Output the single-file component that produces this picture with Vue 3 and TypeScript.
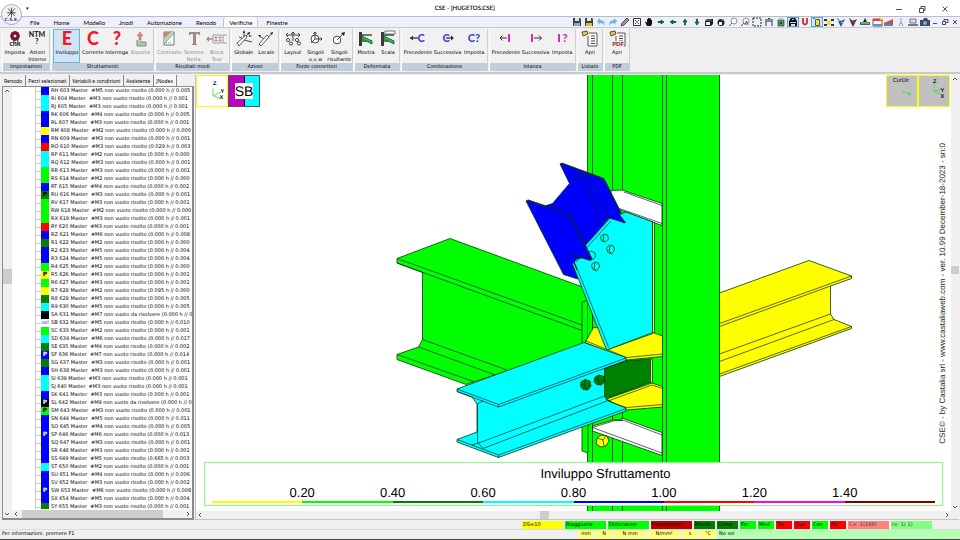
<script setup lang="ts">
interface Action { icon: string; label: string; active?: boolean; disabled?: boolean }
interface Group { title: string; size: string; actions: Action[] }
interface Row { code: string; num: number; color: string; mark: string; text: string }

const menus = ['File', 'Home', 'Modello', 'Jnodi', 'Automazione', 'Renodo', 'Verifiche', 'Finestre']

const groups: Group[] = [
  { title: 'Impostazioni', size: 'g48', actions: [{ icon: 'chk', label: 'Imposta' }, { icon: 'ntm', label: 'Azioni Interne' }] },
  { title: 'Sfruttamenti', size: 'g104', actions: [
    { icon: 'env', label: 'Inviluppo', active: true }, { icon: 'cur', label: 'Corrente' },
    { icon: 'ask', label: 'Interroga' }, { icon: 'exp', label: 'Esporta', disabled: true }] },
  { title: 'Risultati modi', size: 'g75', actions: [
    { icon: 'con', label: 'Contrasto', disabled: true }, { icon: 'sez', label: 'Sezione Netta', disabled: true },
    { icon: 'blk', label: 'Block Tear', disabled: true }] },
  { title: 'Azioni', size: 'g48', actions: [{ icon: 'glo', label: 'Globale' }, { icon: 'loc', label: 'Locale' }] },
  { title: 'Forze connettori', size: 'g73', actions: [
    { icon: 'lay', label: 'Layout' }, { icon: 'uvw', label: 'Singoli u,v,w' }, { icon: 'ris', label: 'Singoli risultante' }] },
  { title: 'Deformata', size: 'g46', actions: [{ icon: 'mos', label: 'Mostra' }, { icon: 'sca', label: 'Scala' }] },
  { title: 'Combinazione', size: 'g87', actions: [
    { icon: 'cprev', label: 'Precedente' }, { icon: 'cnext', label: 'Successiva' }, { icon: 'cset', label: 'Imposta' }] },
  { title: 'Istanza', size: 'g87', actions: [
    { icon: 'iprev', label: 'Precedente' }, { icon: 'inext', label: 'Successiva' }, { icon: 'iset', label: 'Imposta' }] },
  { title: 'Listato', size: 'g26', actions: [{ icon: 'list', label: 'Apri' }] },
  { title: 'PDF', size: 'g26', actions: [{ icon: 'pdf', label: 'Apri' }] },
]

const label = (t: string, x: number, y: number, size: number, color: string) =>
  `<text x="${x}" y="${y}" font-family="Lato, sans-serif" font-weight="900" font-size="${size}" text-anchor="middle" fill="${color}">${t}</text>`
const letter = (t: string) => label(t, 11, 15, 18, '#ed1c24')
const sheet = '<path d="M9 3H17V16H8V6" fill="#fff" stroke="#555" stroke-width="1"/><path d="M11 6h4M11 8.500h4M11 11h4M11 13.500h4" stroke="#444"/><path d="M2 2l5-1 1 3-5 2z" fill="#e8c840" stroke="#333" stroke-width=".8"/>'
const beam = '<path d="M4 2h3v14H4z" fill="#3a3a3a"/><path d="M7 5h10M7 11h10" stroke="#444" stroke-width="1.500"/><path d="M7 6l10 5v3L7 9z" fill="#1fc050" stroke="#165a2a" stroke-width=".8"/>'

const icons: Record<string, string> = {
  chk: '<circle cx="11" cy="6" r="3.400" fill="none" stroke="#7c1030" stroke-width="2.600"/><path d="M11 1v10M6 6h10M7.500 2.500l7 7M14.500 2.500l-7 7" stroke="#7c1030" stroke-width="1.200"/><circle cx="11" cy="6" r="1.300" fill="#f0f0f0"/>' + label('chk', 11, 16, 7, '#222'),
  ntm: label('NTM', 11, 7, 7, '#222') + label('?', 11, 14, 7, '#222'),
  env: letter('E'),
  cur: letter('C'),
  ask: letter('?'),
  exp: '<path d="M10 2l3 4h-2v4H9V6H7z" fill="#d88a90" stroke="#a66" stroke-width=".5"/><path d="M7 10v6h9v-4h-5v-1" fill="#9bd3a8" stroke="#777" stroke-width=".8"/>',
  con: '<path d="M6 2h10v13H6z" fill="#fff" stroke="#777"/><path d="M6 2h10L6 13z" fill="#b7d99a"/><path d="M6 2h7L6 8z" fill="#cf7d86"/><path d="M16 3L6 14" stroke="#678fc8"/><path d="M8 13h6" stroke="#777" stroke-dasharray="1 1"/>',
  sez: '<path d="M6 2h11v3h-1l-1-1h-2v10h1v1H9v-1h1V4H8L7 5H6z" fill="#a08a86"/>',
  blk: '<path d="M1 9h6M3 7L1 9l2 2" fill="none" stroke="#c77" stroke-width="1.300"/><path d="M16 5H7v8h9M21 5h-4v8h4" fill="none" stroke="#999"/><path d="M9 7h2v1H9zM13 7h2v1h-2zM9 10h2v1H9zM13 10h2v1h-2z" fill="none" stroke="#a66" stroke-width=".7"/>',
  glo: '<path d="M5 15L17 2M11 1v9l8 2M11 9l-5-2" fill="none" stroke="#333" stroke-width=".9"/><path d="M4 13l9-8 1 2-8 9z" fill="#fff" stroke="#333" stroke-width=".8"/><path d="M17 2l-1 3-2-2zM11 0l1 3h-2zM19 6l-3 1 0-2z" fill="#222"/>',
  loc: '<path d="M4 6l7 4 7-8" fill="none" stroke="#333" stroke-width=".8"/><path d="M4 14l8-9 2 2-8 9z" fill="#fff" stroke="#333" stroke-width=".8"/><path d="M18 2l-1 3-2-2zM3 5l3 0-1 2z" fill="#222"/>',
  lay: '<path d="M11 2v9M4 5h14M9 4l2-2 2 2M16 3l2 2-2 2M6 3L4 5l2 2" fill="none" stroke="#333" stroke-width=".9"/><circle cx="6" cy="10" r="1.600" fill="#fff" stroke="#333" stroke-width=".9"/><circle cx="15" cy="10" r="1.600" fill="#fff" stroke="#333" stroke-width=".9"/><circle cx="9" cy="13.500" r="1.600" fill="#fff" stroke="#333" stroke-width=".9"/><circle cx="17" cy="13.500" r="1.600" fill="#fff" stroke="#333" stroke-width=".9"/>',
  uvw: '<circle cx="10" cy="9" r="4" fill="#fff" stroke="#333" stroke-width=".9"/><path d="M10 9V2M10 9h7M8.500 4L10 2l1.500 2M15.500 7.500l1.500 1.500-1.500 1.500M10 9l-4 4" fill="none" stroke="#333" stroke-width=".9"/>',
  ris: '<circle cx="9" cy="10" r="3.800" fill="#fff" stroke="#333" stroke-width=".9"/><path d="M9 10l7-7" stroke="#333" stroke-width=".9"/><path d="M17 2l-1 4-3-3z" fill="#222"/>',
  mos: beam,
  sca: beam + '<path d="M8 1h10v3H8z" fill="#fff" stroke="#555" stroke-width=".8"/>',
  cprev: '<path d="M3 8h8" stroke="#333" stroke-width="1.300"/><path d="M3 8l3-2.500v5z" fill="#333"/>' + label('C', 14, 12, 11, '#4048d0'),
  cnext: label('C', 9, 12, 11, '#4048d0') + '<path d="M9 8h7" stroke="#333" stroke-width="1.300"/><path d="M17 8l-3-2.500v5z" fill="#333"/>',
  cset: label('C?', 11, 12, 11, '#4048d0'),
  iprev: '<path d="M5 8h7M7.500 5.500L5 8l2.500 2.500" fill="none" stroke="#333"/><path d="M14 4v8" stroke="#c830c8" stroke-width="2"/>',
  inext: '<path d="M7 4v8" stroke="#c830c8" stroke-width="2"/><path d="M9 8h7M14 5.500L16.500 8 14 10.500" fill="none" stroke="#333"/>',
  iset: '<path d="M8 4v8" stroke="#c830c8" stroke-width="2"/>' + label('?', 14, 12, 11, '#c830c8'),
  list: '<g transform="translate(1)">' + sheet + '</g>',
  pdf: '<g transform="translate(2)">' + sheet + '</g><path d="M6 11h12v6H6z" fill="#f0f0f0"/>' + label('PDF', 12, 16, 6, '#a01830'),
}

const floppy = (c: string) => `<path d="M2 1h7l1 1v7H2z" fill="#3c4450"/><path d="M4 1h4v3H4z" fill="#dfe5ee"/><path d="M3 6h6v3H3z" fill="${c}"/>`
const arrow = (deg: number) => `<g transform="rotate(${deg} 6 5)"><path d="M3 4.500h3V3l3 2-3 2V5.500H3z" fill="#0a8a2c" stroke="#042" stroke-width=".7"/></g>`

const tools: { name: string; art: string; on?: boolean }[] = [
  { name: 'Salva', art: floppy('#9aa4b4') },
  { name: 'Salva con nome', art: floppy('#f0b820') },
  { name: 'Annulla', art: '<path d="M2 4l3-3v2c4 0 5 3 5 6-1-2-2-3-5-3v2z" fill="#6db8e8"/>' },
  { name: 'Ripeti', art: '<path d="M10 4L7 1v2C3 3 2 6 2 9c1-2 2-3 5-3v2z" fill="#6db8e8"/>' },
  { name: 'Modifica', art: '<path d="M2 9l1-3 5-5 2 2-5 5z" fill="#999" stroke="#444" stroke-width=".9"/>' },
  { name: 'Griglia', art: '<path d="M2.500 1.500h7v7h-7z" fill="#fff" stroke="#333"/><path d="M4 3.500h1M7 3.500h1M4 6.500h1M7 6.500h1M5 5h2" stroke="#333"/>' },
  { name: 'Sposta', art: '<path d="M4 9L2 5l1-.500L4 6V2h1V1h1.500v.500H8V3h1v4L8 9z" fill="#111"/>' },
  { name: 'Destra', art: arrow(0) }, { name: 'Sinistra', art: arrow(180) },
  { name: 'Su', art: arrow(270) }, { name: 'Giù', art: arrow(90) },
  { name: 'Assonometria', art: '<path d="M2 4l2-2h6v5L8 9H2z" fill="#222"/><path d="M3 5h4v3H3z" fill="#eef"/><path d="M4 2.500h5L8 4H3z" fill="#2a8a4a"/>' },
  { name: 'Ruota', art: '<circle cx="6" cy="5.500" r="3.500" fill="#222"/><path d="M4 5h3v3H4z" fill="#eef"/><path d="M5 3l3-1 1 2z" fill="#3a9a7a"/>' },
  { name: 'Zoom', art: '<circle cx="7" cy="4" r="3" fill="#f8fbff" stroke="#888" stroke-width=".9"/><path d="M5 6L2 9" stroke="#666"/>' },
  { name: 'Zoom tutto', art: '<circle cx="7" cy="4" r="3" fill="#f8fbff" stroke="#888" stroke-width=".9"/><path d="M5 6L2 9M6 8l1.500-4L9 8" fill="none" stroke="#555"/>' },
  { name: 'Selezione', art: '<path d="M2 1h8v8H2z" fill="none" stroke="#222" stroke-dasharray="2 1"/>' },
  { name: 'Sezione', art: '<path d="M3 9V4h6v5" fill="none" stroke="#333"/><path d="M2 2h8v2H2z" fill="#6a9a7a"/><path d="M5 1h2v1H5z" fill="#333"/>' },
  { name: 'Vista', art: '<path d="M3 3h6v6H3z" fill="#3fb36a" stroke="#333" stroke-width=".7"/><path d="M4 1h4v2H4z" fill="#bbb"/><circle cx="6" cy="6" r="1.500" fill="#724"/>' },
  { name: 'Stampa', on: true, art: '<path d="M2 4l2-3h4l2 3v5H8V7H4v2H2z" fill="#111"/><path d="M3 5.500h6M5 2.500h2" stroke="#ddd" stroke-width=".9"/>' },
  { name: 'Calamita', art: '<path d="M4 1v5q2 3 4 0V1" fill="none" stroke="#d82020" stroke-width="1.700"/>' },
  { name: 'Sfondo', on: true, art: '<path d="M4.500 2.500h4v6h-4z" fill="#ffe020" stroke="#555"/><path d="M2 1h2v1H2z" fill="#4a90d0"/>' },
  { name: 'Nodi', art: '<path d="M1 2h3v2H1zM8 2h3v2H8zM1 7h3v2H1zM8 7h3v2H8z" fill="#333"/><path d="M4 3h4v5H4z" fill="#e8dc50"/>' },
  { name: 'Bulloni', art: '<path d="M2 1l4 3 4-2-2 4-2 4-2-4z" fill="#2a5a7a"/><path d="M3 3h2v1H3zM6 5h2v1H6z" fill="#9cf"/>' },
  { name: 'Togli bulloni', art: '<path d="M2 1l4 3 4-2-2 4-2 4-2-4z" fill="#2d3f4c"/><path d="M6 3h2v3H6z" fill="#d02020"/>' },
  { name: 'Carichi', art: '<path d="M1 5h10v3H1z" fill="#207090"/><path d="M6 1l2 4H4z" fill="#222"/><path d="M2 6h8" stroke="#e8d030"/>' },
  { name: 'Diagrammi', art: '<path d="M2 2h9v7H2z" fill="#fff" stroke="#c33"/><path d="M2 2h9v2H2z" fill="#e04040"/><path d="M2 7h9v2H2z" fill="#40a0d0"/><path d="M9 1h2v2H9z" fill="#fd0"/>' },
  { name: 'Inclinata', art: '<path d="M1 6l9-4v7H1z" fill="#d84a4a"/><path d="M1 7h9v2H1z" fill="#3898b8"/>' },
  { name: 'Misura', art: '<path d="M6 1v4L4 9M6 5l2 4" fill="none" stroke="#999"/>' },
  { name: 'Livella', art: '<path d="M3 2h6v4H3z" fill="#dde" stroke="#556" stroke-width=".8"/><path d="M1 8h10" stroke="#456" stroke-width="1.500"/>' },
  { name: 'Fotografia', art: '<path d="M1 3h3l1-2h3l1 2h2v6H1z" fill="#3c4c68"/><circle cx="6" cy="6" r="2" fill="#8ea4c0"/>' },
]

const sheets = ['Renodo', 'Pezzi selezionati', 'Variabili e condizioni', 'Assistente', 'JNodes']

const palette: Record<string, string> = {
  b: '#0000ff', c: '#00ffff', y: '#ffff00', r: '#ff0000', l: '#00ff00', g: '#008000', k: '#000000', w: '#ffffff',
}

// code, member count, colour key, optional mark, second ratio, optional first ratio
const source = `RH 5 b - 005|RI 3 c - 001|RJ 3 c - 001|RK 4 b - 005|RL 3 b - 001|RM 2 y - 000|RN 3 b - 001|RO 3 r - 003 029
RP 2 c - 000|RQ 3 c - 001|RR 3 l - 001|RS 2 l - 000|RT 4 b - 002|RU 3 g P 001|RV 3 l - 001|RW 2 l - 000|RX 3 l - 001
RY 3 r - 001|RZ 6 b - 008|R1 2 g - 000|R2 5 b - 004|R3 5 b - 004|R4 2 l - 000|R5 3 y P 001|R6 3 l - 001|R7 2 y - 000 095
R8 5 g - 005|R9 5 c - 005|SA 7 k - 000 x|SB 5 w sel 010|SC 2 l - 001|SD 6 c - 017|SE 4 g - 002|SF 7 b P 014|SG 3 g - 001
SH 3 b - 001|SI 3 c - 001|SJ 3 c - 001|SK 3 b - 001|SL 9 k P 000 x|SM 3 l P 001|SN 5 b - 011|SO 4 b - 005|SP 6 b P 013
SQ 3 b - 001|SR 3 b - 001|SS 5 b - 003 665|ST 2 c - 001|SU 4 b - 006|SV 3 b - 002|SW 6 b P 008|SX 5 b - 004|SY 3 g - 001`

const rows: Row[] = source.split(/[|\n]/).map((item, i) => {
  const [code, m, color, mark, second, first] = item.split(' ')
  const pending = first === 'x'
  const a = pending || !first ? '000' : first
  return {
    code, num: 603 + i, color, mark: mark === '-' ? '' : mark,
    text: `Master  #M${m} non vuoto ${pending ? 'da risolvere' : 'risolto'} (0.${a} h // ${pending ? '0' : '0.' + second}`,
  }
})

const ticks = ['0.20', '0.40', '0.60', '0.80', '1.00', '1.20', '1.40']
const scaleColors = ['yellow', 'lime', 'green', 'cyan', 'blue', 'red', 'magenta', 'maroon']

const flags = [
  ['DS=10', 'wide yellow'], ['Riaggiusta', 'wide lime'], ['Dislocatore', 'wide lime'], ['Intersettore', 'wide crimson'],
  ['Memb', 'mid green'], ['Comp', 'mid green'], ['Fin', 'slim lime'], ['Med', 'slim lime'], ['Ter', 'slim red'],
  ['Qua', 'slim red'], ['Cen', 'slim lime'], ['Alt', 'slim red'], ['C=  1(168)', 'wide pink'], ['I=  1( 1)', 'wide mint'],
]
const units = [['mm', 'slim'], ['N', 'slim'], ['N mm', 'broad'], ['N/mm²', 'broad'], ['s', 'slim'], ['°C', 'slim']]
</script>

<template>
  <div class="app">
    <header class="head">
      <button class="orb" aria-label="Menu CSE">
        <svg viewBox="0 0 22 22">
          <path d="M11 3v11M6 9h10M7 4l8 9M15 4l-8 9" stroke="#222" stroke-width=".9" />
          <text x="11" y="18" font-size="5" font-weight="700" text-anchor="middle" fill="#3238b8">C.S.E.</text>
        </svg>
      </button>
      <div class="title">
        <span class="quick">▾</span>
        <h1>CSE - [HUGETOS.CSE]</h1>
        <div class="win">
          <button aria-label="Riduci"><svg viewBox="0 0 8 8"><path d="M1 4.500h6" /></svg></button>
          <button aria-label="Ripristina"><svg viewBox="0 0 8 8"><path d="M1.500 3.500h4v4h-4zM3 3V1.500h4v4H6" /></svg></button>
          <button aria-label="Chiudi"><svg viewBox="0 0 8 8"><path d="M1.500 1.500l5 5M6.500 1.500l-5 5" /></svg></button>
        </div>
      </div>
      <div class="bar">
        <nav class="menus">
          <button v-for="m in menus" :key="m" :class="{ current: m === 'Verifiche' }">{{ m }}</button>
        </nav>
        <div class="tools">
          <button v-for="t in tools" :key="t.name" :class="{ on: t.on }" :aria-label="t.name">
            <svg viewBox="0 0 12 10" v-html="t.art"></svg>
          </button>
          <div class="mdi">
            <button aria-label="Riduci finestra"><svg viewBox="0 0 8 8"><path d="M2 5.500h4" /></svg></button>
            <button aria-label="Ripristina finestra"><svg viewBox="0 0 8 8"><path d="M1.500 3.500h3v3h-3zM3 3V1.500h4v3H5" /></svg></button>
            <button aria-label="Chiudi finestra"><svg viewBox="0 0 8 8"><path d="M2 2l4 4M6 2L2 6" /></svg></button>
          </div>
        </div>
      </div>
    </header>

    <section class="ribbon">
      <div v-for="g in groups" :key="g.title" class="group" :class="g.size">
        <div class="actions">
          <button v-for="a in g.actions" :key="a.icon" :class="{ active: a.active }" :disabled="a.disabled">
            <svg viewBox="0 0 22 17" v-html="icons[a.icon]"></svg>
            <span>{{ a.label }}</span>
          </button>
        </div>
        <h2>{{ g.title }}</h2>
      </div>
    </section>

    <main class="work">
      <aside class="side">
        <div class="sheets">
          <button v-for="s in sheets" :key="s" :class="{ current: s === 'JNodes' }">{{ s }}</button>
        </div>
        <div class="frame">
          <div class="vbar">
            <svg viewBox="0 0 8 8"><path d="M2 5l2-2 2 2" /></svg>
            <i class="thumb"></i>
            <svg viewBox="0 0 8 8"><path d="M2 3l2 2 2-2" /></svg>
          </div>
          <div class="treebox">
            <ul class="tree">
              <li v-for="r in rows" :key="r.num">
                <b :class="['chip', 'm-' + r.color]" :style="{ background: palette[r.color] }">{{ r.mark }}</b>
                <span>{{ r.code }} {{ r.num }}  {{ r.text }}</span>
              </li>
            </ul>
            <div class="hbar">
              <svg viewBox="0 0 8 8"><path d="M5 2L3 4l2 2" /></svg>
              <i class="thumb"></i>
              <svg viewBox="0 0 8 8"><path d="M3 2l2 2-2 2" /></svg>
            </div>
          </div>
        </div>
      </aside>

      <section class="view">
        <div class="stage">
          <svg class="scene" viewBox="196 75 755 436" preserveAspectRatio="xMidYMid slice">
            <!-- column -->
            <path class="lime" d="M587.500 74H719.500V512H587.500z" />
            <path class="ln" d="M592.500 74V512M612.500 74V190M622.500 74V190M612.500 405V512M622.500 405V512" />
            <path class="paper" d="M611 190.500L622 190L662 203.500V225.500L610 206z" />
            <path class="ln" d="M624 192L662 205.500M618 208L662 223.500" />
            <!-- lower stiffener -->
            <path class="paper" d="M592.500 426L613 420H622V418L662 432.500V455.500L592.500 431z" />
            <path class="ln" d="M592.500 427.500L662 453M592.500 427.500L615 420.500H624L662 435" />
            <path class="ln" d="M662.500 74V512M666.500 74V512" />
            <!-- left beam -->
            <path class="lime" d="M397 258.500L450 238.500L588 289V344L466 384.500L397 359.500V354.500L418.500 347L422.500 339.500V272.500L397 263z" />
            <path class="ln" d="M397 258.500L582 325M397 263L582 330.500M422.500 339.500L507 370M418.500 347L494 374.500M397 354.500L474 381.700" />
            <!-- connection plate -->
            <path class="lime" d="M582 302L588 300V453L582 451z" />
            <path class="lime bare" d="M588 300H592V340H588z" />
            <path class="ln" d="M592.500 300V328" />
            <!-- upper gusset stiffener -->
            <path class="yellow" d="M585 342.500L593.500 327.500L653 332.500L662.500 336V356.500L626.500 360z" />
            <path class="ln" d="M585 340.500L626.500 357.500L662.500 354M606.500 350L653 333.500" />
            <!-- web plate -->
            <path class="dark" d="M604.500 368.500L626 361L651 359V382L608 398L604.500 396z" />
            <path class="yellow" d="M650.500 359H652.500V383H650.500z" />
            <path class="yellow" d="M606.500 399L652 383L662.500 386.500V407L626.500 410z" />
            <path class="ln" d="M607 401L626.500 407.500L662.500 404.500M608 401L652 385L662.500 388.500" />
            <!-- front beam -->
            <path class="cyan" d="M457 389L584 342.500L626 357.500V361L604.500 368.500V396L607 400.500L626 408V411L498.500 457.500L457 442V439.500L477 432V404L472 397L457 391.500z" />
            <path class="ln" d="M457 389L498.500 404.500L626 358M457 391.500L498.500 407L626 360.500M498.500 404.500V407M477.500 404V432M477 404L483 401M480 442.500L604.500 396M483 448.500L607 401M457 439.500L498.500 455L626 408.500M498.500 455V457.500M477.500 432V442L483 448.500M472 445L480 442.500" />
            <g class="dark">
              <path d="M581 382l4-2.500 5 1.500 1 5-3 4-5-.500-2.500-3z" /><path d="M585 380l-1 5 2 5M584 385l-3-1M586 390l4-5" />
              <path d="M595 377l4-2 5 1.500.500 5-3 3.500-5-.500-2.500-3z" /><path d="M599 375l-1 5 2 5M598 380l-3-1M600 385l4-5" />
            </g>
            <!-- brace -->
            <path class="blue" d="M526 201L528 200L545 206L552.500 203.500L569.500 183.500L560 164L562 163L604 178.500L626 222.500L624 223.500L609 218L586 246L592 259L590.500 260.500L578 258L577.500 279L563.500 274.500z" />
            <path class="cyan" d="M572.500 264L577 259L586.500 257L584 247L609.500 218.500L626 212L653 222V332.500L606.500 350z" />
            <path class="ln" d="M575 263.500L608.500 347M587 247.500L611 221M576 262L581 257" />
            <path class="cyan" d="M588 253l3-2 4 2 .500 4-3 2.500-4-1z" />
            <path class="blue" d="M562 230L570 214L592 259L590.500 260.500L570.500 254L574 262L577 270z" />
            <path class="blue bare" d="M560 216L569 217L573 254L575 264L566 258z" />
            <path class="blue bare" d="M608 200L626 222.500L624 223L609 218z" />
            <path class="ln" d="M526 201L568.500 216L590.500 260.500M528 200L570 213.500L592 259M552.500 203.500L555 209M581 175.500L600.500 219.500L608 217.500M587 175L609 218M600.500 219.500L582.500 239.500M560 164L602 179.500L624 223.500M604 178.500L602 179.500M575 170L578 177L585 174.500H592M569.500 183.500L578 177M570.500 254L590.500 260.500M609 218L626 222.500" />
            <g class="cyan">
              <path d="M600.500 237l3-3 4 1 1 4-3 3-4-1z" /><path d="M604 235l-1 5 2 2" />
              <path d="M606.500 248l3-3 4 1 1 4-3 4-4-2z" /><path d="M610 246l-1 5 2 2" />
              <path d="M591.500 265l3-3 4 1 1 4-3 4-4-2z" /><path d="M595 263l-1 5 2 2" />
            </g>
            <path class="yellow" d="M652.500 222L654.500 223V333L652.500 332.500z" />
            <!-- right beam -->
            <path class="yellow" d="M719.500 293L809 260.500L851.500 276V278.500L830.500 286V314L834 319.500L851.500 326.500V328.500L719.500 376.500z" />
            <path class="ln" d="M851.500 276L719.500 323.500M830.500 286L719.500 326.500M830.500 314L719.500 354M834 319.500L719.500 361.500M851.500 326.500L719.500 374" />
            <path class="yellow" d="M597 438l4-3 6 1 2 5-3 5-5 1-5-3z" /><path class="ln" d="M606 436l-3 4 1 6M603 440l-6-2" />
          </svg>

          <div class="tiles">
            <svg class="tile axes" viewBox="0 0 32 32"><path d="M17 21V13M17 21l9-4M17 21l8 3" /><text x="17" y="10">Z</text><text x="25" y="18">Y</text><text x="24" y="25">X</text></svg>
            <div class="tile section"><b>SB</b></div>
          </div>
          <div class="tiles right">
            <svg class="tile gray" viewBox="0 0 32 32"><text class="thin" x="6" y="6">CurDir</text><path d="M16 16l8 3" /><path d="M26 20l-3 0 1-2z" /></svg>
            <svg class="tile gray" viewBox="0 0 32 32"><path d="M16 16V8M16 16l8-2M16 16l8 4" /><text x="15" y="7">Z</text><text x="23" y="17">Y</text><text x="23" y="23">X</text></svg>
          </div>
          <p class="credit">CSE© - by Castalia srl - www.castaliaweb.com - ver. 10.99 December-18-2023 - sn:0</p>

          <div class="legend">
            <h3>Inviluppo Sfruttamento</h3>
            <div class="ticks"><span v-for="t in ticks" :key="t">{{ t }}</span></div>
            <div class="scale"><i v-for="c in scaleColors" :key="c" :style="{ background: c }"></i></div>
          </div>
        </div>
        <div class="vbar">
          <svg viewBox="0 0 8 8"><path d="M2 5l2-2 2 2" /></svg>
          <i class="thumb"></i>
          <svg viewBox="0 0 8 8"><path d="M2 3l2 2 2-2" /></svg>
        </div>
        <div class="hbar">
          <svg viewBox="0 0 8 8"><path d="M5 2L3 4l2 2" /></svg>
          <i class="thumb"></i>
          <svg viewBox="0 0 8 8"><path d="M3 2l2 2-2 2" /></svg>
        </div>
      </section>
    </main>

    <footer class="foot">
      <div class="flags"><span v-for="f in flags" :key="f[0]" :class="f[1]">{{ f[0] }}</span></div>
      <div class="info">
        <p>Per informazioni, premere F1</p>
        <div class="units"><span v-for="u in units" :key="u[0]" :class="u[1]">{{ u[0] }}</span></div>
        <p class="sel">No sel</p>
      </div>
    </footer>
  </div>
</template>

<style>
html, body { margin: 0; background: #f0f0f0; }
</style>

<style scoped>
* { box-sizing: border-box; margin: 0; padding: 0; }
.app { display: flex; flex-direction: column; height: 100vh; overflow: hidden; background: #f0f0f0; color: #000; font: 5px/8px "DejaVu Sans", "Noto Sans", sans-serif; text-rendering: geometricPrecision; }
button { border: 0; background: none; font: inherit; color: inherit; }
svg { display: block; overflow: visible; }

.head { position: relative; flex: none; }
.orb { position: absolute; left: 1px; top: 4px; width: 21px; height: 21px; border: 1px solid #a8a8b0; border-radius: 50%; background: #f2f2f4; box-shadow: inset 0 0 2px #fff; }
.orb svg { width: 19px; height: 19px; }
.title { display: grid; grid-template-columns: 9fr auto 10fr; align-items: center; height: 16px; padding: 2px 11px 0 26px; background: #fff; }
.title h1 { font: 600 6px/8px Lato, sans-serif; }
.win { display: flex; justify-content: flex-end; gap: 15px; }
.win svg, .mdi svg { width: 8px; height: 8px; fill: none; stroke: #222; stroke-width: 0.8; }
.bar { display: flex; justify-content: space-between; height: 11px; padding: 0 1px 0 23px; border-top: 1px solid #bcbcc8; background: #edf0fb; }
.menus { display: flex; gap: 1px; font: 6px/9px Lato, sans-serif; }
.menus button { padding: 1px 6px 0 7px; }
.menus button.current { border: 1px solid #c4c4cc; border-width: 0 1px; border-radius: 3px 3px 0 0; background: #fafafc; padding: 1px 5px 0; }
.tools { display: flex; }
.tools > button { width: 12px; height: 10px; }
.tools > button svg { width: 12px; height: 10px; }
.tools .on { background: #cce4f7; outline: 1px solid #5aa5dd; outline-offset: -1px; }
.mdi { display: flex; align-items: center; gap: 2px; }

.ribbon { display: flex; flex: none; gap: 1px; height: 47px; padding: 1px 2px 1px; border-bottom: 2px solid #c9c9ce; border-top: 1px solid #c9c9ce; background: #efefef; }
.group { display: flex; flex-direction: column; flex: none; border-right: 1px solid #cfcfcf; border-left: 1px solid #fff; background: #f1f1f1; }
.g26 { width: 26px; } .g46 { width: 46px; } .g48 { width: 48px; } .g73 { width: 73px; }
.g75 { width: 75px; } .g87 { width: 87px; } .g104 { width: 103px; }
.actions { display: flex; justify-content: space-evenly; flex: 1; }
.actions button { display: flex; flex-direction: column; align-items: center; width: min-content; min-width: 20px; height: 34px; padding-top: 1px; line-height: 7px; }
.actions svg { width: 22px; height: 17px; margin-bottom: 2px; }
.actions .active { min-width: 27px; background: #cfe4f5; outline: 1px solid #6ab0e0; outline-offset: -1px; }
.actions button:disabled { color: #8c8c8c; }
.group h2 { height: 8px; background: #c0cedb; font: inherit; line-height: 9px; text-align: center; white-space: nowrap; }

.work { display: flex; flex: 1; min-height: 0; }
.side { display: flex; flex-direction: column; width: 194px; flex: none; }
.sheets { display: flex; height: 12px; padding: 1px 0 0 2px; font: 5px/10px "Noto Sans", sans-serif; }
.sheets button { padding: 1px 3px 0 2px; border-right: 1px solid #888; white-space: nowrap; }
.sheets .current { padding-top: 0; background: #f7f7f7; }
.frame { display: flex; flex: 1; min-height: 0; margin-left: 2px; border: 1px solid #8c8c8c; border-bottom-width: 2px; border-right-width: 2px; background: #fff; }
.vbar { display: flex; flex-direction: column; justify-content: space-between; width: 9px; flex: none; background: #f0f0f0; }
.hbar { display: flex; justify-content: space-between; height: 8px; flex: none; background: #f0f0f0; }
.vbar svg, .hbar svg { width: 8px; height: 8px; fill: none; stroke: #555; stroke-width: 1; }
.thumb { background: #cdcdcd; }
.frame .vbar .thumb { height: 15px; margin-bottom: 52px; }
.treebox { display: flex; flex: 1; flex-direction: column; min-width: 0; }
.frame .hbar .thumb { width: 141px; margin-right: 20px; }
.tree { flex: 1; min-height: 0; margin-bottom: 1px; overflow: hidden; list-style: none; }
.tree li { display: flex; height: 8px; margin-left: 23px; border-left: 1px solid #c8c8c8; white-space: pre; background: linear-gradient(#c8c8c8, #c8c8c8) 0 4px / 5px 1px no-repeat; }
.chip { flex: none; width: 8px; margin: 0 2px 0 5px; color: #000; font-size: 6px; text-align: center; }
.m-b, .m-k { color: #fff; }
.m-w { color: #2020ff; font-size: 5px; font-weight: 400; }

.view { display: grid; flex: 1; grid-template: 1fr 8px / 1fr 8px; min-width: 0; margin: 1px 1px 0 1px; border-left: 1px solid #c4c4c4; border-bottom: 1px solid #c4c4c4; }
.stage { position: relative; min-width: 0; min-height: 0; overflow: hidden; background: #fff; font-family: "Liberation Sans", Arial, sans-serif; }
.view .vbar { width: 8px; }
.view .vbar .thumb { height: 8px; margin-bottom: 46px; }
.view .hbar .thumb { width: 9px; margin-right: 58px; }
.scene { position: absolute; inset: 0; width: 100%; height: 100%; overflow: hidden; }
.scene path { stroke: #003c00; stroke-width: 0.8; }
.scene .ln { fill: none; stroke: #123; stroke-width: 0.7; }
.scene .bare { stroke: none; }
.lime { fill: #00ff00; } .paper { fill: #fff; } .yellow { fill: #ffff00; } .cyan { fill: #00ffff; }
.blue { fill: #0000ff; } .dark { fill: #008000; }

.tiles { position: absolute; left: 0; top: 0; display: flex; }
.tiles.right { left: auto; right: 1px; }
.tile { width: 32px; height: 32px; border: 1px solid #ffff00; stroke: #30e030; stroke-width: 0.8; fill: none; }
.tile text { stroke: none; fill: #111; font-size: 6px; font-weight: 700; }
.tile .thin { font-weight: 400; }
.tile.gray { background: #c0c0c0; }
.axes { background: #fff; }
.section { display: flex; align-items: center; justify-content: center; border-color: #555; background: linear-gradient(90deg, #c000c0 50%, #000 50%, #000 54%, #00ffff 54%); }
.section b { background: #fff; color: #000; font: 14px/16px "Liberation Sans", sans-serif; }
.credit { position: absolute; right: 3px; top: 68px; writing-mode: vertical-rl; text-orientation: sideways; transform: rotate(180deg); font-size: 8px; line-height: 10px; white-space: nowrap; color: #222; }
.legend { position: absolute; left: 8px; right: 8px; bottom: 5px; height: 44px; padding: 3px 7px 0; border: 1px solid #80ff80; background: #fff; color: #000; font-size: 13px; line-height: 15px; }
.legend h3 { font: inherit; text-align: center; margin-left: 64px; }
.ticks { display: flex; justify-content: space-around; margin: 4px 0 0; padding: 0 45px; }
.ticks span { flex: 1; text-align: center; }
.scale { display: flex; height: 2px; margin-top: 1px; }
.scale i { flex: 1; }

.foot { flex: none; border-bottom: 1px solid #444; }
.flags { display: flex; justify-content: flex-end; gap: 2px; height: 10px; padding: 1px 28px 0 0; border-bottom: 1px solid #dcdcdc; white-space: pre; }
.flags span { padding-left: 1px; line-height: 9px; }
.wide { width: 41px; } .mid { width: 21px; } .slim { width: 16px; } .broad { width: 32px; }
.flags .yellow { background: #ffff00; } .flags .lime { background: #00ff00; } .flags .green { background: #008000; }
.red { background: #ff0000; } .crimson { background: #c00000; } .pink { background: #ff8080; color: #444; } .mint { background: #80ff80; color: #444; }
.info { display: grid; grid-template-columns: 1fr auto 243px; height: 9px; line-height: 9px; }
.info p:first-child { padding-left: 2px; }
.units { display: flex; gap: 2px; padding-right: 1px; }
.units span { background: #ffff80; text-align: center; }
.sel { padding-left: 2px; background: #b4ffb4; }
</style>
